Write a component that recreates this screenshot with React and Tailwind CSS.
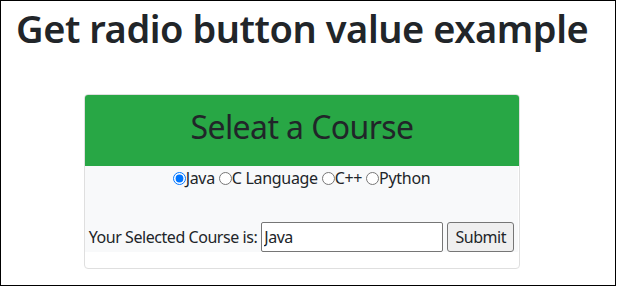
import React from "react";

export default function App() {
  const font = { fontFamily: '"Noto Sans", "Open Sans", sans-serif' };
  return (
    <div
      className="w-[616px] h-[286px] border border-black bg-white text-[#212529] overflow-hidden"
      style={font}
    >
      <h1 className="pl-[15px] pt-[3px] h-[93px] text-[38px] leading-[48px] font-semibold tracking-[-0.45px] whitespace-nowrap">
        Get radio button value example
      </h1>
      <div className="ml-[83px] w-[436px] h-[175px] border border-[#dfdfdf] rounded-[4px] overflow-hidden">
        <div className="h-[71px] bg-[#28a745] flex items-center justify-center text-[32px] leading-none font-normal tracking-[-0.6px] pb-[7px]">
          Seleat a Course
        </div>
        <div className="h-[86px] bg-[#f8f9fa] text-center text-[16px] leading-[24px] tracking-[-0.45px] mr-[1px]">
          <div className="flex items-center justify-center whitespace-pre tracking-[-0.3px]">
            <input type="radio" name="c" defaultChecked className="w-[13px] h-[13px] m-0" />
            <span>Java </span>
            <input type="radio" name="c" className="w-[13px] h-[13px] m-0" />
            <span>C Language </span>
            <input type="radio" name="c" className="w-[13px] h-[13px] m-0" />
            <span>C++ </span>
            <input type="radio" name="c" className="w-[13px] h-[13px] m-0" />
            <span>Python</span>
          </div>
          <div className="mt-[32px] flex items-center justify-center">
            <span className="whitespace-nowrap">Your Selected Course is:</span>
            <input
              type="text"
              defaultValue="Java"
              className="ml-[4px] w-[182px] h-[30px] border border-[#767676] rounded-[2px] bg-white px-[2px] text-[16px] tracking-[-0.45px] outline-none"
            />
            <button className="ml-[4px] w-[67px] h-[30px] border border-[#767676] rounded-[3px] bg-[#efefef] text-[16px] tracking-[-0.45px]">
              Submit
            </button>
          </div>
        </div>
      </div>
    </div>
  );
}
